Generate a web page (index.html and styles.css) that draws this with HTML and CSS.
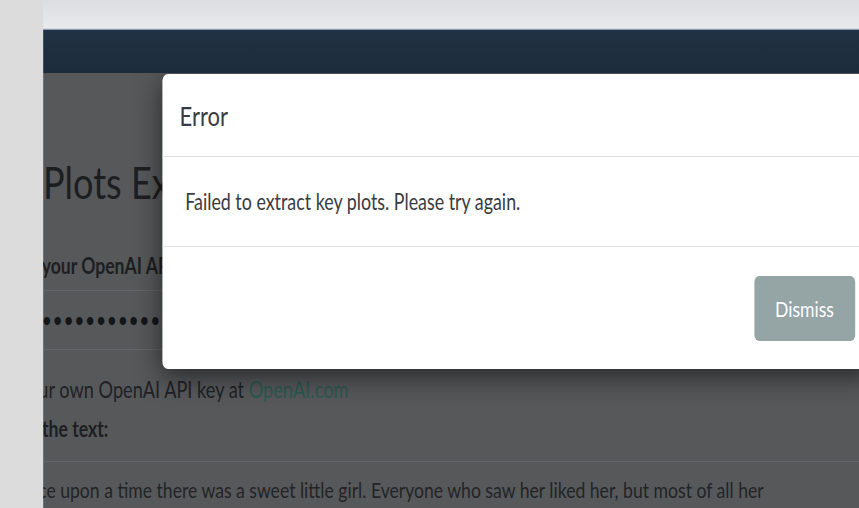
FILE: index.html
```html
<!DOCTYPE html>
<html lang="en">
<head>
<meta charset="utf-8">
<title>Key Plots Extractor</title>
<link rel="stylesheet" href="styles.css">
</head>
<body>
<div class="screen">
  <aside class="rail"></aside>
  <div class="window">
    <div class="chrome"></div>
    <nav class="navbar"></nav>
    <main class="page">
      <div class="content">
        <h1 class="title">Key Plots Extractor</h1>
        <label class="label">Enter your OpenAI API key:</label>
        <div class="field field-key">&bull;&bull;&bull;&bull;&bull;&bull;&bull;&bull;&bull;&bull;&bull;&bull;&bull;&bull;&bull;&bull;&bull;&bull;&bull;&bull;&bull;&bull;&bull;&bull;&bull;&bull;&bull;&bull;&bull;&bull;</div>
        <p class="hint">Get your own OpenAI API key at <a class="link" href="#">OpenAI.com</a></p>
        <label class="label label-text">Enter the text:</label>
        <div class="field field-text">Once upon a time there was a sweet little girl. Everyone who saw her liked her, but most of all her grandmother.</div>
      </div>

      <div class="modal" role="dialog">
        <div class="modal-header">
          <h5 class="modal-title">Error</h5>
        </div>
        <div class="modal-body">Failed to extract key plots. Please try again.</div>
        <div class="modal-footer">
          <button class="btn-dismiss" type="button">Dismiss</button>
        </div>
      </div>
    </main>
  </div>
</div>
</body>
</html>
```

FILE: styles.css
```css
html, body {
  margin: 0;
  padding: 0;
  overflow: hidden;
  background: #dcdcdc;
}

/* the whole window is drawn slightly condensed horizontally */
.screen {
  width: 1074px;
  height: 508px;
  display: flex;
  transform: scaleX(0.8);
  transform-origin: 0 0;
  font-family: Lato, "Open Sans", sans-serif;
}

.rail {
  flex: 0 0 54px;
  background: #dcdcdc;
}

.window {
  flex: 1;
  display: flex;
  flex-direction: column;
  min-width: 0;
}

.chrome {
  height: 28px;
  background: linear-gradient(#dcdde1, #e9eaed);
  border-bottom: 1px solid #d3d5da;
}

.navbar {
  height: 43px;
  border-top: 1px solid #8f9eb4;
  background: linear-gradient(#203143, #1d2c3c);
}

.page {
  flex: 1;
  position: relative;
  overflow: hidden;
  background: #57585a;
  color: #1d1f22;
}

.content {
  margin-left: -59px;
}

.title {
  margin: 82px 0 0 -26px;
  font-size: 45px;
  font-weight: 400;
  line-height: 54px;
  white-space: nowrap;
  color: #1c1e21;
}

.label {
  display: block;
  margin-top: 40px;
  font-size: 22px;
  font-weight: 700;
  line-height: 33px;
  white-space: nowrap;
}

.label-text {
  margin-top: 6px;
}

.field {
  box-sizing: border-box;
  width: 1200px;
  padding-left: 21px;
  border-top: 1px solid #646568;
  border-bottom: 1px solid #646568;
  overflow: hidden;
}

.field-key {
  margin-top: 8px;
  height: 60px;
  padding-left: 30px;
  font-size: 22px;
  line-height: 58px;
  letter-spacing: 0.8px;
  white-space: nowrap;
  color: #141619;
}

.hint {
  margin: 23px 0 0 -13px;
  font-size: 22.7px;
  line-height: 33px;
  white-space: nowrap;
  color: #1f2124;
}

.link {
  color: #2b5a4f;
  text-decoration: none;
}

.field-text {
  margin-top: 16px;
  padding: 11px 221px 0 23px;
  height: 80px;
  border-bottom: none;
  font-size: 22px;
  line-height: 33px;
  color: #222427;
}

/* dialog */
.modal {
  position: absolute;
  top: 1px;
  left: 148.5px;
  width: 888px;
  background: #fff;
  border-radius: 7px;
  box-shadow: 0 8px 30px rgba(0, 0, 0, 0.55);
  color: #383b41;
}

.modal-header {
  padding: 21px 22px 20px;
  border-bottom: 1px solid #e1e3e5;
}

.modal-title {
  margin: 0;
  font-size: 27.5px;
  font-weight: 400;
  line-height: 41px;
}

.modal-body {
  padding: 28px 29px;
  font-size: 22.3px;
  line-height: 33px;
  border-bottom: 1px solid #e1e3e5;
}

.modal-footer {
  display: flex;
  justify-content: flex-end;
  padding: 29px 22px 28px;
}

.btn-dismiss {
  font-family: inherit;
  font-size: 22px;
  line-height: 33px;
  padding: 16px 26px;
  border: 0;
  border-radius: 6px;
  background: #95a4a5;
  color: #fff;
}
```
